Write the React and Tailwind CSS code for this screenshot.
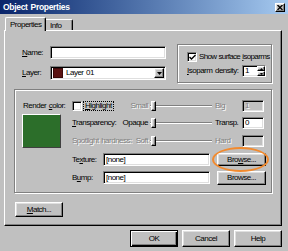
const sunken =
  "border border-[#808080] border-b-white border-r-white shadow-[inset_1px_1px_0_#000,inset_-1px_-1px_0_#dfdfdf]";
const raised =
  "border border-white border-b-black border-r-black shadow-[inset_-1px_-1px_0_#808080,inset_1px_1px_0_#dfdfdf]";
const etched = "border border-[#808080] shadow-[inset_1px_1px_0_#fff,1px_1px_0_#fff]";
const gray = "text-[#808080] [text-shadow:1px_1px_0_#fff]";

function Check({ checked }) {
  return (
    <div className={`w-[10px] h-[10px] bg-white shrink-0 flex items-center justify-center ${sunken}`}>
      {checked && (
        <svg width="7" height="7" viewBox="0 0 7 7">
          <path d="M0.5 3 L2.5 5 L6.5 1" stroke="#000" strokeWidth="1.4" fill="none" />
        </svg>
      )}
    </div>
  );
}

function Slider() {
  return (
    <div className="relative w-[62px] h-[10px] flex items-center ml-[2px] shrink-0">
      <div className="w-full h-[2px] border-t border-[#808080] border-b border-b-white" />
      <div className={`absolute left-[1px] top-[0px] w-[5px] h-[10px] bg-[#c0c0c0] ${raised}`} />
    </div>
  );
}

function SmallBox({ children, enabled }) {
  return (
    <div
      className={`w-[22px] h-[12px] shrink-0 flex items-center pl-[2px] ${enabled ? "bg-white" : "bg-[#c0c0c0]"} ${sunken}`}
    >
      {children}
    </div>
  );
}

function Button({ children, w = "w-[48px]", h = "h-[17px]", def }) {
  return (
    <div
      className={`${w} ${h} shrink-0 flex items-center justify-center bg-[#c0c0c0] ${
        def
          ? "border border-black shadow-[inset_1px_1px_0_#fff,inset_-1px_-1px_0_#000,inset_-2px_-2px_0_#808080]"
          : raised
      }`}
    >
      {children}
    </div>
  );
}

export default function App() {
  return (
    <div className="w-[288px] h-[251px] bg-[#c0c0c0] overflow-hidden whitespace-nowrap font-['Liberation_Sans',Arial,sans-serif] text-[8px] tracking-[-0.5px] [word-spacing:0.8px] text-black leading-none">
      {/* Title bar */}
      <div className="h-[14px] flex items-center justify-between pl-[3px] pr-[3px] bg-linear-to-r from-[#0a246a] to-[#a6caf0]">
        <span className="text-white font-bold text-[8.5px] tracking-[-0.3px]">Object Properties</span>
        <div className={`w-[10px] h-[9px] bg-[#c0c0c0] flex items-center justify-center ${raised}`}>
          <svg width="6" height="5" viewBox="0 0 6 5">
            <path d="M0.5 0 L5.5 5 M5.5 0 L0.5 5" stroke="#000" strokeWidth="1.3" />
          </svg>
        </div>
      </div>

      <div className="pl-[4px] pt-[3px]">
        {/* Tabs */}
        <div className="h-[13px] flex items-end pl-[1px]">
          <div className="relative z-10 -mb-[1px] w-[41px] h-[14px] bg-[#c0c0c0] border-l border-t border-white border-r border-r-black rounded-t-[2px] shadow-[inset_-1px_0_0_#808080] flex items-start pt-[3px] pl-[4px]">
            Properties
          </div>
          <div className="w-[27px] h-[11px] bg-[#c0c0c0] border-t border-white border-r border-r-black rounded-tr-[2px] shadow-[inset_-1px_0_0_#808080] flex items-start pt-[2px] pl-[4px]">
            Info
          </div>
        </div>

        {/* Panel */}
        <div className="w-[278px] h-[196px] border border-white border-b-black border-r-black shadow-[inset_-1px_-1px_0_#808080]">
          {/* Upper section */}
          <div className="flex pt-[13px] pl-[17px]">
            <div className="flex flex-col pt-[2px] gap-[7px]">
              <div className="flex items-center h-[13px]">
                <span className="w-[28px]">
                  <u>N</u>ame:
                </span>
                <div className={`w-[116px] h-[13px] bg-white ${sunken}`} />
              </div>
              <div className="flex items-center h-[14px]">
                <span className="w-[28px]">
                  <u>L</u>ayer:
                </span>
                <div className={`w-[116px] h-[14px] bg-white flex items-center pl-[2px] pr-[1px] ${sunken}`}>
                  <div className="w-[10px] h-[10px] bg-[#5b1414] border border-[#3a0a0a]" />
                  <span className="ml-[3px] flex-1">Layer 01</span>
                  <div className={`w-[10px] h-[10px] bg-[#c0c0c0] flex items-center justify-center ${raised}`}>
                    <svg width="5" height="3" viewBox="0 0 5 3">
                      <path d="M0 0 H5 L2.5 3 Z" fill="#000" />
                    </svg>
                  </div>
                </div>
              </div>
            </div>

            <div className={`ml-[11px] w-[95px] h-[39px] pl-[9px] pt-[7px] flex flex-col ${etched}`}>
              <div className="flex items-center h-[10px]">
                <Check checked />
                <span className="ml-[2px] tracking-[-0.65px] [word-spacing:0.5px]">
                  Show surface <u>i</u>soparms
                </span>
              </div>
              <div className="flex items-center h-[12px] mt-[3px]">
                <span className="w-[55px]">
                  <u>I</u>soparm density:
                </span>
                <div className={`w-[24px] h-[12px] bg-white flex items-center pl-[2px] ${sunken}`}>
                  <span className="flex-1">1</span>
                  <div className="flex flex-col w-[8px] h-[10px]">
                    <div className={`h-[5px] bg-[#c0c0c0] flex items-center justify-center ${raised}`}>
                      <svg width="3" height="2" viewBox="0 0 3 2">
                        <path d="M0 2 H3 L1.5 0 Z" fill="#000" />
                      </svg>
                    </div>
                    <div className={`h-[5px] bg-[#c0c0c0] flex items-center justify-center ${raised}`}>
                      <svg width="3" height="2" viewBox="0 0 3 2">
                        <path d="M0 0 H3 L1.5 2 Z" fill="#000" />
                      </svg>
                    </div>
                  </div>
                </div>
              </div>
            </div>
          </div>

          {/* Lower group box */}
          <div className={`ml-[9px] mt-[6px] w-[258px] h-[104px] flex pt-[10px] pl-[7px] ${etched}`}>
            <div className="w-[50px] shrink-0 flex flex-col">
              <div className="h-[12px] flex items-center pl-[1px]">
                <span>
                  Render <u>c</u>olor:
                </span>
              </div>
              <div className="mt-[2px] w-[39px] h-[34px] bg-[#2c6e2a] border border-white border-b-[#404040] border-r-[#404040]" />
            </div>

            <div className="flex flex-col">
              {/* Row 1 */}
              <div className="flex items-center h-[12px]">
                <div className="w-[76px] shrink-0 flex items-center">
                  <Check />
                  <span className="ml-[1px] border border-dotted border-black px-[1px] h-[10px] flex items-center">
                    <span>
                      <u>H</u>ighlight
                    </span>
                  </span>
                  <span className={`ml-auto ${gray}`}>Small</span>
                </div>
                <Slider />
                <span className={`w-[30px] shrink-0 pl-[3px] ${gray}`}>Big</span>
                <SmallBox>
                  <span className={gray}>1</span>
                </SmallBox>
              </div>
              {/* Row 2 */}
              <div className="flex items-center h-[12px] mt-[5px]">
                <div className="w-[76px] shrink-0 flex items-center">
                  <span>
                    <u>T</u>ransparency:
                  </span>
                  <span className="ml-auto">Opaque</span>
                </div>
                <Slider />
                <span className="w-[30px] shrink-0 pl-[3px]">Transp.</span>
                <SmallBox enabled>0</SmallBox>
              </div>
              {/* Row 3 */}
              <div className="flex items-center h-[12px] mt-[6px]">
                <div className="w-[76px] shrink-0 flex items-center">
                  <span className={gray}>Spotlight hardness:</span>
                  <span className={`ml-auto ${gray}`}>Soft</span>
                </div>
                <Slider />
                <span className={`w-[30px] shrink-0 pl-[3px] ${gray}`}>Hard</span>
                <SmallBox />
              </div>
              {/* Texture */}
              <div className="flex items-center h-[13px] mt-[6px]">
                <span className="w-[31px] shrink-0">
                  Te<u>x</u>ture:
                </span>
                <div className={`w-[107px] h-[13px] shrink-0 bg-white flex items-center pl-[2px] ${sunken}`}>[none]</div>
                <div className="relative ml-[7px]">
                  <Button w="w-[49px]" h="h-[13px]">
                    <span>
                      Bro<u>w</u>se...
                    </span>
                  </Button>
                  <div className="absolute z-10 pointer-events-none left-[-5px] top-[-6px] w-[57px] h-[25px] rounded-[50%] border-[2.5px] border-[#f28a2e]" />
                </div>
              </div>
              {/* Bump */}
              <div className="flex items-center h-[13px] mt-[5px]">
                <span className="w-[31px] shrink-0">
                  B<u>u</u>mp:
                </span>
                <div className={`w-[107px] h-[13px] shrink-0 bg-white flex items-center pl-[2px] ${sunken}`}>[none]</div>
                <div className="ml-[7px]">
                  <Button w="w-[49px]" h="h-[14px]">
                    Browse...
                  </Button>
                </div>
              </div>
            </div>
          </div>

          {/* Match */}
          <div className="ml-[10px] mt-[9px]">
            <Button w="w-[48px]" h="h-[15px]">
              <span>
                <u>M</u>atch...
              </span>
            </Button>
          </div>
        </div>

        {/* Bottom buttons */}
        <div className="w-[278px] flex justify-end gap-[4px] mt-[4px]">
          <Button def>OK</Button>
          <Button>Cancel</Button>
          <Button>Help</Button>
        </div>
      </div>
    </div>
  );
}
